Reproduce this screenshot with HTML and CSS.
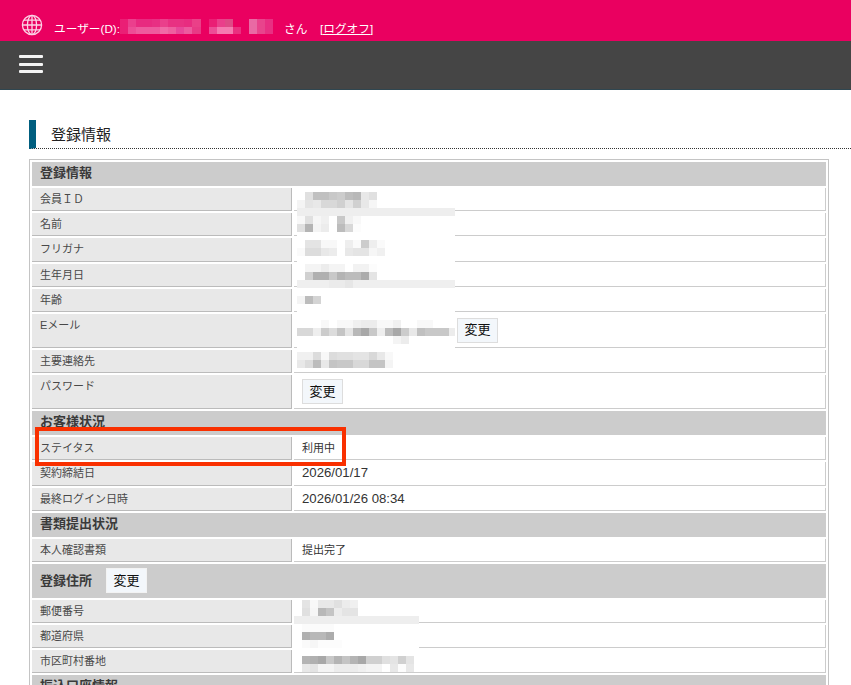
FILE: index.html
```html
<!DOCTYPE html>
<html lang="ja">
<head>
<meta charset="utf-8">
<title>登録情報</title>
<link rel="stylesheet" href="styles.css">
</head>
<body>
<header class="userbar">
  <svg class="globe" viewBox="0 0 22 22" width="22" height="22" fill="none" stroke="#fbd3e6" stroke-width="1.3">
    <circle cx="11" cy="11" r="9.6"/>
    <ellipse cx="11" cy="11" rx="4.6" ry="9.6"/>
    <path d="M11 1.4V20.600M1.400 11H20.600M2.800 6.200H19.200M2.800 15.800H19.200"/>
  </svg>
  <span class="user-text user-label">ユーザー(D):</span>
  <span class="user-text user-san">さん</span>
  <a class="user-text logoff" href="#">[ログオフ]</a>
</header>
<nav class="navbar">
  <button class="burger" aria-label="menu"><span></span><span></span><span></span></button>
</nav>
<main>
  <h1 class="page-title">登録情報</h1>
  <div class="card">
    <div class="sec">登録情報</div>
    <div class="row"><div class="th">会員ＩＤ</div><div class="td"></div></div>
    <div class="row"><div class="th">名前</div><div class="td"></div></div>
    <div class="row"><div class="th">フリガナ</div><div class="td"></div></div>
    <div class="row"><div class="th">生年月日</div><div class="td"></div></div>
    <div class="row"><div class="th">年齢</div><div class="td"></div></div>
    <div class="row tall"><div class="th">Eメール</div><div class="td td-email"><button class="btn">変更</button></div></div>
    <div class="row"><div class="th">主要連絡先</div><div class="td"></div></div>
    <div class="row tall"><div class="th">パスワード</div><div class="td td-pw"><button class="btn">変更</button></div></div>
    <div class="sec">お客様状況</div>
    <div class="row"><div class="th">ステイタス</div><div class="td">利用中</div></div>
    <div class="row"><div class="th">契約締結日</div><div class="td num">2026/01/17</div></div>
    <div class="row"><div class="th">最終ログイン日時</div><div class="td num">2026/01/26 08:34</div></div>
    <div class="sec">書類提出状況</div>
    <div class="row"><div class="th">本人確認書類</div><div class="td">提出完了</div></div>
    <div class="sec sec-tall">登録住所<button class="btn btn-sec">変更</button></div>
    <div class="row"><div class="th">郵便番号</div><div class="td"></div></div>
    <div class="row"><div class="th">都道府県</div><div class="td"></div></div>
    <div class="row"><div class="th">市区町村番地</div><div class="td"></div></div>
    <div class="sec">振込口座情報</div>
  </div>
</main>
<div class="callout"></div>
<svg class="mosaic" width="851" height="685" viewBox="0 0 851 685" shape-rendering="crispEdges">
  <!-- user name -->
  <g>
    <rect x="120" y="19" width="8" height="15" fill="#ea1f75"/>
    <rect x="128" y="19" width="8" height="8" fill="#eb3f8d"/><rect x="136" y="19" width="8" height="8" fill="#e82a80"/><rect x="144" y="19" width="8" height="8" fill="#e82a80"/><rect x="152" y="19" width="8" height="8" fill="#e82f83"/><rect x="160" y="19" width="8" height="8" fill="#ea3f8b"/><rect x="168" y="19" width="8" height="8" fill="#e83182"/><rect x="176" y="19" width="8" height="8" fill="#e83182"/><rect x="184" y="19" width="8" height="8" fill="#e82c80"/><rect x="192" y="19" width="9" height="8" fill="#ea4088"/>
    <rect x="128" y="27" width="8" height="7" fill="#ed4d96"/><rect x="136" y="27" width="8" height="7" fill="#ee5a9e"/><rect x="144" y="27" width="8" height="7" fill="#ee5a9e"/><rect x="152" y="27" width="8" height="7" fill="#ee5a9e"/><rect x="160" y="27" width="8" height="7" fill="#f06aa6"/><rect x="168" y="27" width="8" height="7" fill="#ee5f9f"/><rect x="176" y="27" width="8" height="7" fill="#e8479a"/><rect x="184" y="27" width="8" height="7" fill="#ec5a9e"/><rect x="192" y="27" width="9" height="7" fill="#e83a85"/>
    <rect x="209" y="19" width="8" height="8" fill="#ea1f75"/><rect x="217" y="19" width="8" height="8" fill="#ea3f8b"/><rect x="225" y="19" width="8" height="8" fill="#de4a86"/>
    <rect x="209" y="27" width="8" height="7" fill="#ed4d96"/><rect x="217" y="27" width="16" height="7" fill="#f57ab0"/><rect x="233" y="27" width="8" height="7" fill="#ea2f7f"/>
    <rect x="249" y="19" width="8" height="15" fill="#e96aa4"/><rect x="257" y="19" width="8" height="15" fill="#e8448c"/><rect x="265" y="19" width="8" height="15" fill="#e82f82"/>
  </g>
  <!-- member block -->
  <rect x="297" y="188" width="158" height="161" fill="#fff"/>
  <g id="m-id">
    <rect x="305" y="192" width="8" height="8" fill="#e0e0e0"/><rect x="313" y="192" width="8" height="8" fill="#c0c0c0"/><rect x="321" y="192" width="8" height="8" fill="#c0c0c0"/><rect x="329" y="192" width="8" height="8" fill="#c8c8c8"/><rect x="337" y="192" width="8" height="8" fill="#cccccc"/><rect x="345" y="192" width="8" height="8" fill="#bdbdbd"/><rect x="353" y="192" width="8" height="8" fill="#b8b8b8"/><rect x="361" y="192" width="8" height="8" fill="#e8e8e8"/><rect x="369" y="192" width="8" height="8" fill="#e0e0e0"/>
    <rect x="297" y="200" width="8" height="8" fill="#f4f4f4"/><rect x="305" y="200" width="8" height="8" fill="#e4e4e4"/><rect x="313" y="200" width="8" height="8" fill="#e8e8e8"/><rect x="321" y="200" width="8" height="8" fill="#d8d8d8"/><rect x="329" y="200" width="8" height="8" fill="#d8d8d8"/><rect x="337" y="200" width="8" height="8" fill="#d0d0d0"/><rect x="345" y="200" width="8" height="8" fill="#e4e4e4"/><rect x="353" y="200" width="8" height="8" fill="#d0d0d0"/><rect x="361" y="200" width="8" height="8" fill="#e8e8e8"/><rect x="369" y="200" width="8" height="8" fill="#f6f6f6"/>
    <rect x="297" y="208" width="158" height="8" fill="#eeeeee"/>
  </g>
  <g id="m-name">
    <rect x="297" y="216" width="8" height="8" fill="#f8f8f8"/><rect x="305" y="216" width="8" height="8" fill="#e0e0e0"/><rect x="313" y="216" width="8" height="8" fill="#f6f6f6"/><rect x="321" y="216" width="8" height="8" fill="#f0f0f0"/><rect x="337" y="216" width="8" height="8" fill="#c8c8c8"/><rect x="345" y="216" width="8" height="8" fill="#f0f0f0"/><rect x="353" y="216" width="8" height="8" fill="#f8f8f8"/>
    <rect x="297" y="224" width="8" height="8" fill="#e0e0e0"/><rect x="305" y="224" width="8" height="8" fill="#b4b4b4"/><rect x="313" y="224" width="8" height="8" fill="#f4f4f4"/><rect x="321" y="224" width="8" height="8" fill="#ececec"/><rect x="337" y="224" width="8" height="8" fill="#bcbcbc"/><rect x="345" y="224" width="8" height="8" fill="#d8d8d8"/><rect x="353" y="224" width="8" height="8" fill="#fcfcfc"/>
  </g>
  <g id="m-kana">
    <rect x="305" y="240" width="8" height="8" fill="#e4e4e4"/><rect x="313" y="240" width="8" height="8" fill="#e4e4e4"/><rect x="321" y="240" width="8" height="8" fill="#f8f8f8"/><rect x="329" y="240" width="8" height="8" fill="#f8f8f8"/><rect x="345" y="240" width="8" height="8" fill="#eeeeee"/><rect x="353" y="240" width="8" height="8" fill="#fafafa"/><rect x="361" y="240" width="8" height="8" fill="#cccccc"/><rect x="369" y="240" width="8" height="8" fill="#eeeeee"/><rect x="377" y="240" width="8" height="8" fill="#fafafa"/>
    <rect x="297" y="248" width="8" height="8" fill="#fafafa"/><rect x="305" y="248" width="8" height="8" fill="#dcdcdc"/><rect x="313" y="248" width="8" height="8" fill="#dcdcdc"/><rect x="321" y="248" width="8" height="8" fill="#e8e8e8"/><rect x="329" y="248" width="8" height="8" fill="#ececec"/><rect x="345" y="248" width="8" height="8" fill="#e8e8e8"/><rect x="353" y="248" width="8" height="8" fill="#e4e4e4"/><rect x="361" y="248" width="8" height="8" fill="#e4e4e4"/><rect x="369" y="248" width="8" height="8" fill="#f6f6f6"/><rect x="377" y="248" width="8" height="8" fill="#f0f0f0"/>
  </g>
  <g id="m-birth">
    <rect x="305" y="264" width="8" height="8" fill="#f4f4f4"/><rect x="313" y="264" width="8" height="8" fill="#f4f4f4"/><rect x="321" y="264" width="8" height="8" fill="#ececec"/><rect x="329" y="264" width="8" height="8" fill="#f4f4f4"/><rect x="337" y="264" width="8" height="8" fill="#f4f4f4"/><rect x="353" y="264" width="8" height="8" fill="#f2f2f2"/><rect x="361" y="264" width="8" height="8" fill="#f2f2f2"/><rect x="369" y="264" width="8" height="8" fill="#fcfcfc"/>
    <rect x="305" y="272" width="8" height="8" fill="#d0d0d0"/><rect x="313" y="272" width="8" height="8" fill="#b0b0b0"/><rect x="321" y="272" width="8" height="8" fill="#b0b0b0"/><rect x="329" y="272" width="8" height="8" fill="#c8c8c8"/><rect x="337" y="272" width="8" height="8" fill="#b4b4b4"/><rect x="345" y="272" width="8" height="8" fill="#bcbcbc"/><rect x="353" y="272" width="8" height="8" fill="#bcbcbc"/><rect x="361" y="272" width="8" height="8" fill="#acacac"/><rect x="369" y="272" width="8" height="8" fill="#e4e4e4"/>
    <rect x="297" y="280" width="158" height="8" fill="#efefef"/><rect x="329" y="280" width="16" height="8" fill="#ebebeb"/><rect x="345" y="280" width="8" height="8" fill="#e6e6e6"/>
  </g>
  <g id="m-age">
    <rect x="297" y="296" width="8" height="8" fill="#f4f4f4"/><rect x="305" y="296" width="8" height="8" fill="#bcbcbc"/><rect x="313" y="296" width="8" height="8" fill="#d4d4d4"/>
  </g>
  <g id="m-mail">
    <rect x="321" y="320" width="8" height="8" fill="#f8f8f8"/><rect x="337" y="320" width="8" height="8" fill="#f8f8f8"/><rect x="345" y="320" width="8" height="8" fill="#f8f8f8"/><rect x="353" y="320" width="8" height="8" fill="#f0f0f0"/><rect x="361" y="320" width="16" height="8" fill="#ececec"/><rect x="377" y="320" width="16" height="8" fill="#f8f8f8"/><rect x="393" y="320" width="8" height="8" fill="#f0f0f0"/><rect x="417" y="320" width="16" height="8" fill="#f8f8f8"/>
    <rect x="297" y="328" width="16" height="8" fill="#d8d8d8"/><rect x="313" y="328" width="8" height="8" fill="#eeeeee"/><rect x="321" y="328" width="8" height="8" fill="#cccccc"/><rect x="329" y="328" width="8" height="8" fill="#dcdcdc"/><rect x="337" y="328" width="8" height="8" fill="#c4c4c4"/><rect x="345" y="328" width="8" height="8" fill="#e4e4e4"/><rect x="353" y="328" width="8" height="8" fill="#b8b8b8"/><rect x="361" y="328" width="8" height="8" fill="#a8a8a8"/><rect x="369" y="328" width="8" height="8" fill="#c8c8c8"/><rect x="377" y="328" width="8" height="8" fill="#eeeeee"/><rect x="385" y="328" width="8" height="8" fill="#bcbcbc"/><rect x="393" y="328" width="8" height="8" fill="#a8a8a8"/><rect x="401" y="328" width="8" height="8" fill="#cccccc"/><rect x="409" y="328" width="8" height="8" fill="#e8e8e8"/><rect x="417" y="328" width="8" height="8" fill="#c0c0c0"/><rect x="425" y="328" width="24" height="8" fill="#c8c8c8"/><rect x="449" y="328" width="6" height="8" fill="#ececec"/>
    <rect x="393" y="336" width="8" height="8" fill="#f4f4f4"/><rect x="401" y="336" width="8" height="8" fill="#ececec"/>
  </g>
  <g id="m-tel">
    <rect x="297" y="352" width="16" height="8" fill="#f0f0f0"/><rect x="313" y="352" width="8" height="8" fill="#dcdcdc"/><rect x="321" y="352" width="8" height="8" fill="#f8f8f8"/><rect x="329" y="352" width="8" height="8" fill="#dcdcdc"/><rect x="337" y="352" width="16" height="8" fill="#e0e0e0"/><rect x="353" y="352" width="16" height="8" fill="#e4e4e4"/><rect x="369" y="352" width="8" height="8" fill="#d8d8d8"/><rect x="377" y="352" width="8" height="8" fill="#e8e8e8"/><rect x="385" y="352" width="8" height="8" fill="#f8f8f8"/>
    <rect x="297" y="360" width="8" height="8" fill="#e8e8e8"/><rect x="305" y="360" width="8" height="8" fill="#dcdcdc"/><rect x="313" y="360" width="8" height="8" fill="#bcbcbc"/><rect x="321" y="360" width="8" height="8" fill="#e8e8e8"/><rect x="329" y="360" width="8" height="8" fill="#c4c4c4"/><rect x="337" y="360" width="16" height="8" fill="#c8c8c8"/><rect x="353" y="360" width="16" height="8" fill="#d8d8d8"/><rect x="369" y="360" width="16" height="8" fill="#c4c4c4"/><rect x="385" y="360" width="8" height="8" fill="#f4f4f4"/>
  </g>
  <!-- address block -->
  <rect x="294" y="599" width="125" height="50" fill="#fff"/>
  <g id="m-zip">
    <rect x="302" y="600" width="8" height="8" fill="#e4e4e4"/><rect x="310" y="600" width="8" height="8" fill="#f8f8f8"/><rect x="318" y="600" width="16" height="8" fill="#e8e8e8"/><rect x="334" y="600" width="8" height="8" fill="#e0e0e0"/><rect x="342" y="600" width="8" height="8" fill="#ececec"/><rect x="350" y="600" width="8" height="8" fill="#f0f0f0"/>
    <rect x="302" y="608" width="8" height="8" fill="#e0e0e0"/><rect x="310" y="608" width="8" height="8" fill="#f6f6f6"/><rect x="318" y="608" width="8" height="8" fill="#b8b8b8"/><rect x="326" y="608" width="8" height="8" fill="#c4c4c4"/><rect x="334" y="608" width="8" height="8" fill="#ececec"/><rect x="342" y="608" width="16" height="8" fill="#e4e4e4"/>
    <rect x="294" y="616" width="125" height="8" fill="#eeeeee"/>
  </g>
  <g id="m-pref">
    <rect x="302" y="624" width="32" height="8" fill="#fbfbfb"/>
    <rect x="302" y="632" width="8" height="8" fill="#b0b0b0"/><rect x="310" y="632" width="16" height="8" fill="#b8b8b8"/><rect x="326" y="632" width="8" height="8" fill="#acacac"/>
    <rect x="302" y="640" width="8" height="8" fill="#fafafa"/><rect x="310" y="640" width="8" height="8" fill="#f6f6f6"/><rect x="318" y="640" width="24" height="8" fill="#fcfcfc"/>
  </g>
  <g id="m-addr">
    <rect x="302" y="656" width="8" height="8" fill="#b4b4b4"/><rect x="310" y="656" width="8" height="8" fill="#b0b0b0"/><rect x="318" y="656" width="8" height="8" fill="#a8a8a8"/><rect x="326" y="656" width="8" height="8" fill="#c8c8c8"/><rect x="334" y="656" width="8" height="8" fill="#b4b4b4"/><rect x="342" y="656" width="8" height="8" fill="#c4c4c4"/><rect x="350" y="656" width="8" height="8" fill="#b4b4b4"/><rect x="358" y="656" width="8" height="8" fill="#a8a8a8"/><rect x="366" y="656" width="16" height="8" fill="#d0d0d0"/><rect x="382" y="656" width="8" height="8" fill="#e0e0e0"/><rect x="390" y="656" width="8" height="8" fill="#e4e4e4"/><rect x="398" y="656" width="8" height="8" fill="#d0d0d0"/><rect x="406" y="656" width="8" height="8" fill="#e4e4e4"/>
    <rect x="302" y="664" width="8" height="8" fill="#e8e8e8"/><rect x="310" y="664" width="8" height="8" fill="#e4e4e4"/><rect x="318" y="664" width="16" height="8" fill="#f4f4f4"/><rect x="334" y="664" width="24" height="8" fill="#ececec"/><rect x="358" y="664" width="8" height="8" fill="#f0f0f0"/><rect x="366" y="664" width="16" height="8" fill="#f4f4f4"/><rect x="390" y="664" width="8" height="8" fill="#e8e8e8"/><rect x="398" y="664" width="8" height="8" fill="#fcfcfc"/><rect x="406" y="664" width="8" height="8" fill="#e8e8e8"/>
  </g>
</svg>
</body>
</html>
```
FILE: styles.css
```css
html, body {
  margin: 0;
  height: 685px;
  overflow: hidden;
}
body {
  position: relative;
  background: #fff;
  color: #333;
  font-family: "Liberation Sans", "Noto Sans CJK JP", sans-serif;
  font-size: 11px;
}
.userbar {
  height: 41px;
  background: #ea0060;
  color: #fff;
  display: flex;
  align-items: center;
  padding: 9px 0 0 21px;
  box-sizing: border-box;
  font-size: 11.700px;
}
.globe {
  margin-right: 11px;
  flex: none;
}
.user-text {
  margin-top: 4px;
}
.user-label {
  width: 230px;
}
.user-san {
  width: 36px;
}
.logoff {
  color: #fff;
}
.navbar {
  height: 49px;
  background: #454545;
  border-bottom: 1px solid #2f4650;
  box-sizing: border-box;
  padding: 14px 0 0 19px;
}
.burger {
  display: flex;
  flex-direction: column;
  gap: 4.500px;
  width: 24px;
  padding: 0;
  border: 0;
  background: none;
}
.burger span {
  display: block;
  width: 24px;
  height: 3px;
  border-radius: 1px;
  background: #f4f4f4;
}
main {
  padding: 30px 0 0 29px;
}
.page-title {
  margin: 0;
  height: 29px;
  box-sizing: border-box;
  border-left: 7px solid #005e7f;
  border-bottom: 1px dotted #333;
  padding: 4px 0 0 15px;
  font-size: 15px;
  font-weight: 400;
  line-height: 22px;
  color: #222;
}
.card {
  width: 800px;
  box-sizing: border-box;
  margin-top: 10px;
  border: 1px solid #c4c4c4;
  padding: 2px;
  display: flex;
  flex-direction: column;
  gap: 2px;
}
.sec {
  flex: none;
  height: 24px;
  box-sizing: border-box;
  background: #ccc;
  padding: 0 0 2px 8px;
  font-size: 13px;
  font-weight: 700;
  line-height: 20px;
  color: #3a3a3a;
  display: flex;
  align-items: center;
}
.sec-tall {
  height: 34px;
  padding-bottom: 0;
}
.row {
  flex: none;
  height: 23.200px;
  display: grid;
  grid-template-columns: 260px 1fr;
  column-gap: 2px;
}
.tall {
  height: 34px;
}
.th {
  background: #e8e8e8;
  border-right: 1px solid #bbb;
  border-bottom: 1px solid #bbb;
  padding-left: 8px;
  line-height: 22px;
  color: #484848;
}
.td {
  border-right: 1px solid #ccc;
  border-bottom: 1px solid #ccc;
  padding-left: 8px;
  line-height: 22px;
  color: #333;
}
.num {
  font-size: 13.200px;
}
.btn {
  display: block;
  box-sizing: border-box;
  width: 41px;
  height: 25px;
  padding: 0;
  border: 1px solid #ddd;
  background: #f3f7fb;
  color: #111;
  font-family: inherit;
  font-size: 13px;
  font-weight: 400;
  line-height: 22px;
}
.td-email .btn {
  margin: 4px 0 0 155px;
}
.td-pw .btn {
  margin-top: 4px;
}
.btn-sec {
  margin-left: 14px;
  border-color: #f3f3f3;
}
.callout {
  position: absolute;
  left: 35px;
  top: 427px;
  width: 311px;
  height: 39px;
  box-sizing: border-box;
  border: 4px solid #f93000;
}
.mosaic {
  position: absolute;
  left: 0;
  top: 0;
  pointer-events: none;
}
```
